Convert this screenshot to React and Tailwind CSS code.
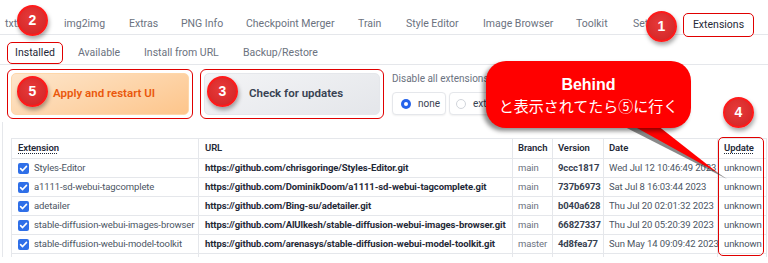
import React from "react";

const rows = [
  ["Styles-Editor", "https://github.com/chrisgoringe/Styles-Editor.git", "main", "9ccc1817", "Wed Jul 12 10:46:49 2023"],
  ["a1111-sd-webui-tagcomplete", "https://github.com/DominikDoom/a1111-sd-webui-tagcomplete.git", "main", "737b6973", "Sat Jul 8 16:03:44 2023"],
  ["adetailer", "https://github.com/Bing-su/adetailer.git", "main", "b040a628", "Thu Jul 20 02:01:32 2023"],
  ["stable-diffusion-webui-images-browser", "https://github.com/AlUlkesh/stable-diffusion-webui-images-browser.git", "main", "66827337", "Thu Jul 20 05:20:39 2023"],
  ["stable-diffusion-webui-model-toolkit", "https://github.com/arenasys/stable-diffusion-webui-model-toolkit.git", "master", "4d8fea77", "Sun May 14 09:09:42 2023"],
];

const topTabs = [
  ["txt2img", "w-[59px]"],
  ["img2img", "w-[65px]"],
  ["Extras", "w-[52px]"],
  ["PNG Info", "w-[65px]"],
  ["Checkpoint Merger", "w-[112px]"],
  ["Train", "w-[48px]"],
  ["Style Editor", "w-[77px]"],
  ["Image Browser", "w-[93px]"],
  ["Toolkit", "w-[57px]"],
  ["Settings", "w-[50px]"],
];

function Badge({ n, className }) {
  return (
    <div
      className={
        "absolute w-[31px] h-[31px] rounded-full border-2 border-[#ff1a1a] bg-[radial-gradient(circle_at_45%_40%,#e83a3a,#cf2424)] shadow-[1px_3px_4px_rgba(0,0,0,0.35)] flex items-center justify-center text-white font-bold text-[14px] font-['Liberation_Sans',sans-serif] " +
        className
      }
    >
      {n}
    </div>
  );
}

function Check() {
  return (
    <div className="w-[11px] h-[11px] rounded-[2px] bg-[#2f6fe8] flex items-center justify-center shrink-0">
      <svg width="9" height="9" viewBox="0 0 10 10">
        <path d="M1.8 5.2 L4 7.3 L8.3 2.6" fill="none" stroke="white" strokeWidth="1.8" strokeLinecap="round" strokeLinejoin="round" />
      </svg>
    </div>
  );
}

const cols = ["w-[187px]", "w-[314px]", "w-[40px]", "w-[51px]", "w-[114px]", "w-[49px]"];

export default function App() {
  return (
    <div className="relative w-[768px] h-[263px] overflow-hidden bg-white font-['Roboto',sans-serif] text-[#6b7280]">
      {/* top tabs */}
      <div className="flex items-start h-[35px] pt-[13px] pl-[5px] border-b border-[#e5e7eb] text-[10.5px]">
        {topTabs.map(([t, w]) => (
          <div key={t} className={"h-[22px] leading-[22px] shrink-0 whitespace-nowrap " + w}>
            {t}
          </div>
        ))}
        <div className="h-[24px] w-[71px] shrink-0 rounded-[5px] border border-[#e00000] bg-white flex items-center justify-center text-[#1f2937]">
          Extensions
        </div>
      </div>

      {/* second tabs */}
      <div className="flex items-start h-[30px] pt-[7px] pl-[7px] border-b border-[#e5e7eb] text-[10.5px]">
        <div className="h-[22px] w-[56px] shrink-0 rounded-[5px] border border-[#e00000] bg-white flex items-center justify-center text-[#1f2937]">
          Installed
        </div>
        <div className="ml-[15px] w-[66px] h-[22px] leading-[22px] shrink-0">Available</div>
        <div className="w-[99px] h-[22px] leading-[22px] shrink-0">Install from URL</div>
        <div className="h-[22px] leading-[22px] shrink-0">Backup/Restore</div>
      </div>

      {/* buttons row */}
      <div className="flex items-start pl-[7px] pt-[4px] gap-[7px] h-[57px]">
        <div className="w-[186px] h-[50px] rounded-[6px] border border-[#e00000] p-[3px]">
          <div className="h-full rounded-[5px] border border-[#fed7aa] bg-[linear-gradient(160deg,#fde6cc,#fdc58b)] flex items-center pl-[41px] text-[#ea580c] font-semibold text-[11.5px]">
            Apply and restart UI
          </div>
        </div>
        <div className="w-[184px] h-[50px] rounded-[6px] border border-[#e00000] p-[3px]">
          <div className="h-full rounded-[5px] border border-[#e5e7eb] bg-[linear-gradient(160deg,#f3f4f6,#e4e6ea)] flex items-center pl-[44px] text-[#374151] font-semibold text-[11.5px]">
            Check for updates
          </div>
        </div>
        <div className="ml-[1px] pt-[3px] flex flex-col">
          <div className="text-[10px] text-[#6b7280] h-[14px] leading-[14px]">Disable all extensions</div>
          <div className="flex gap-[3px] mt-[6px]">
            <div className="h-[23px] w-[54px] rounded-[4px] border border-[#e5e7eb] bg-white shadow-[0_1px_2px_rgba(0,0,0,0.06)] flex items-center pl-[8px] gap-[7px] text-[10px] text-[#374151]">
              <div className="w-[10px] h-[10px] rounded-full bg-[#2563eb] flex items-center justify-center">
                <div className="w-[4px] h-[4px] rounded-full bg-white" />
              </div>
              none
            </div>
            <div className="h-[23px] w-[62px] rounded-[4px] border border-[#e5e7eb] bg-white shadow-[0_1px_2px_rgba(0,0,0,0.06)] flex items-center pl-[6px] gap-[7px] text-[10px] text-[#374151]">
              <div className="w-[10px] h-[10px] rounded-full border border-[#d1d5db] bg-white" />
              extra
            </div>
          </div>
        </div>
      </div>

      {/* table panel */}
      <div className="ml-[2px] border-l border-[#e5e7eb] pl-[8px] pt-[16px]">
        <div className="border-t border-l border-[#e5e7eb] text-[9.5px] tracking-[-0.1px] w-[756px]">
          <div className="flex h-[20px] border-b border-[#e5e7eb] text-[#1f2937] font-semibold">
            <div className={cols[0] + " border-r border-[#e5e7eb] pl-[6px] flex items-center"}>
              <span className="underline decoration-dotted underline-offset-2">Extension</span>
            </div>
            <div className={cols[1] + " border-r border-[#e5e7eb] pl-[6px] flex items-center"}>URL</div>
            <div className={cols[2] + " border-r border-[#e5e7eb] pl-[5px] flex items-center"}>Branch</div>
            <div className={cols[3] + " border-r border-[#e5e7eb] pl-[5px] flex items-center"}>Version</div>
            <div className={cols[4] + " border-r border-[#e5e7eb] pl-[5px] flex items-center"}>Date</div>
            <div className={cols[5] + " border-r border-[#e5e7eb] pl-[6px] flex items-center"}>
              <span className="underline decoration-dotted underline-offset-2">Update</span>
            </div>
          </div>
          {rows.map((r) => (
            <div key={r[0]} className="flex h-[19px] border-b border-[#e5e7eb] whitespace-nowrap">
              <div className={cols[0] + " border-r border-[#e5e7eb] pl-[6px] flex items-center gap-[5px] text-[#4b5563] overflow-hidden"}>
                <Check />
                {r[0]}
              </div>
              <div className={cols[1] + " border-r border-[#e5e7eb] pl-[6px] flex items-center font-bold text-[#1f2937] overflow-hidden"}>{r[1]}</div>
              <div className={cols[2] + " border-r border-[#e5e7eb] pl-[5px] flex items-center text-[#6b7280]"}>{r[2]}</div>
              <div className={cols[3] + " border-r border-[#e5e7eb] pl-[5px] flex items-center font-bold text-[#374151]"}>{r[3]}</div>
              <div className={cols[4] + " border-r border-[#e5e7eb] pl-[5px] flex items-center text-[#4b5563]"}>{r[4]}</div>
              <div className={cols[5] + " border-r border-[#e5e7eb] pl-[6px] flex items-center text-[#4b5563]"}>unknown</div>
            </div>
          ))}
          <div className="flex h-[3px]">
            {cols.map((c) => (
              <div key={c} className={c + " border-r border-[#e5e7eb]"} />
            ))}
          </div>
        </div>
      </div>

      {/* annotation: update column box */}
      <div className="absolute left-[718px] top-[137px] w-[46px] h-[119px] rounded-[5px] border border-[#e00000]" />

      {/* callout */}
      <svg className="absolute left-0 top-0" width="768" height="263">
        <polygon points="615,122 643,122 727,179" fill="rgba(40,40,40,0.55)" />
        <polygon points="619,118 648,118 718,173" fill="#ff0000" />
      </svg>
      <div className="absolute left-[486px] top-[61px] w-[205px] h-[67px] rounded-[20px] bg-[#ff0000] shadow-[-3px_3px_4px_rgba(0,0,0,0.45)] flex flex-col items-center justify-center text-white">
        <div className="font-bold text-[16px] leading-[21px] font-['Liberation_Sans',sans-serif]">Behind</div>
        <div className="text-[15px] leading-[21px] font-['Noto_Sans_CJK_JP',sans-serif]">と表示されてたら⑤に行く</div>
      </div>

      <Badge n="2" className="left-[17px] top-[5px]" />
      <Badge n="1" className="left-[646px] top-[11px]" />
      <Badge n="5" className="left-[17px] top-[76px]" />
      <Badge n="3" className="left-[207px] top-[76px]" />
      <Badge n="4" className="left-[723px] top-[97px]" />
    </div>
  );
}
